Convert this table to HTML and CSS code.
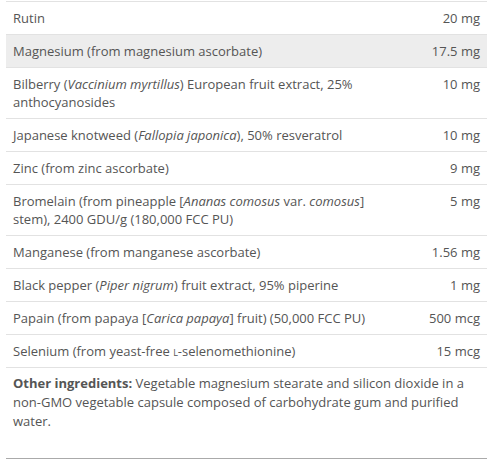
FILE: index.html
```html
<!DOCTYPE html>
<html>
<head>
<meta charset="utf-8">
<link rel="stylesheet" href="styles.css">
</head>
<body>
<div class="panel">
  <table class="facts">
    <colgroup><col class="c-desc"><col class="c-amt"></colgroup>
    <tr><td>Rutin</td><td class="amt">20 mg</td></tr>
    <tr class="shade"><td>Magnesium (from magnesium ascorbate)</td><td class="amt">17.5 mg</td></tr>
    <tr><td>Bilberry (<i>Vaccinium myrtillus</i>) European fruit extract, 25% anthocyanosides</td><td class="amt">10 mg</td></tr>
    <tr><td>Japanese knotweed (<i>Fallopia japonica</i>), 50% resveratrol</td><td class="amt">10 mg</td></tr>
    <tr><td>Zinc (from zinc ascorbate)</td><td class="amt">9 mg</td></tr>
    <tr><td>Bromelain (from pineapple [<i>Ananas comosus</i> var. <i>comosus</i>] stem), 2400 GDU/g (180,000 FCC PU)</td><td class="amt">5 mg</td></tr>
    <tr><td>Manganese (from manganese ascorbate)</td><td class="amt">1.56 mg</td></tr>
    <tr><td>Black pepper (<i>Piper nigrum</i>) fruit extract, 95% piperine</td><td class="amt">1 mg</td></tr>
    <tr><td>Papain (from papaya [<i>Carica papaya</i>] fruit) (50,000 FCC PU)</td><td class="amt">500 mcg</td></tr>
    <tr><td>Selenium (from yeast-free <span class="sc">l</span>-selenomethionine)</td><td class="amt">15 mcg</td></tr>
  </table>
  <p class="other"><b>Other ingredients:</b> Vegetable magnesium stearate and silicon dioxide in a non-GMO vegetable capsule composed of carbohydrate gum and purified water.</p>
</div>
</body>
</html>
```
FILE: styles.css
```css
html, body {
  margin: 0;
  padding: 0;
  background: #fff;
}
body {
  font-family: "Open Sans", "Liberation Sans", sans-serif;
  font-size: 13px;
  color: #555;
}
.panel {
  width: 481px;
  margin: 1px 0 0 6px;
  border-bottom: 1px solid #aaa;
  padding-bottom: 27px;
}
.facts {
  width: 100%;
  table-layout: fixed;
  border-collapse: collapse;
  border-top: 1px solid #e2e2e2;
}
.c-desc {
  width: 389px;
}
.c-amt {
  width: 92px;
}
.facts td {
  padding: 7px 7px;
  line-height: 18px;
  vertical-align: top;
  border-bottom: 1px solid #e2e2e2;
}
.facts td.amt {
  text-align: right;
  white-space: nowrap;
}
.facts tr.shade td {
  background: #ededed;
}
.sc {
  font-variant: small-caps;
}
.other {
  margin: 0;
  padding: 6px 7px 0 7px;
  line-height: 19px;
}
.other b {
  font-weight: 700;
}
```
